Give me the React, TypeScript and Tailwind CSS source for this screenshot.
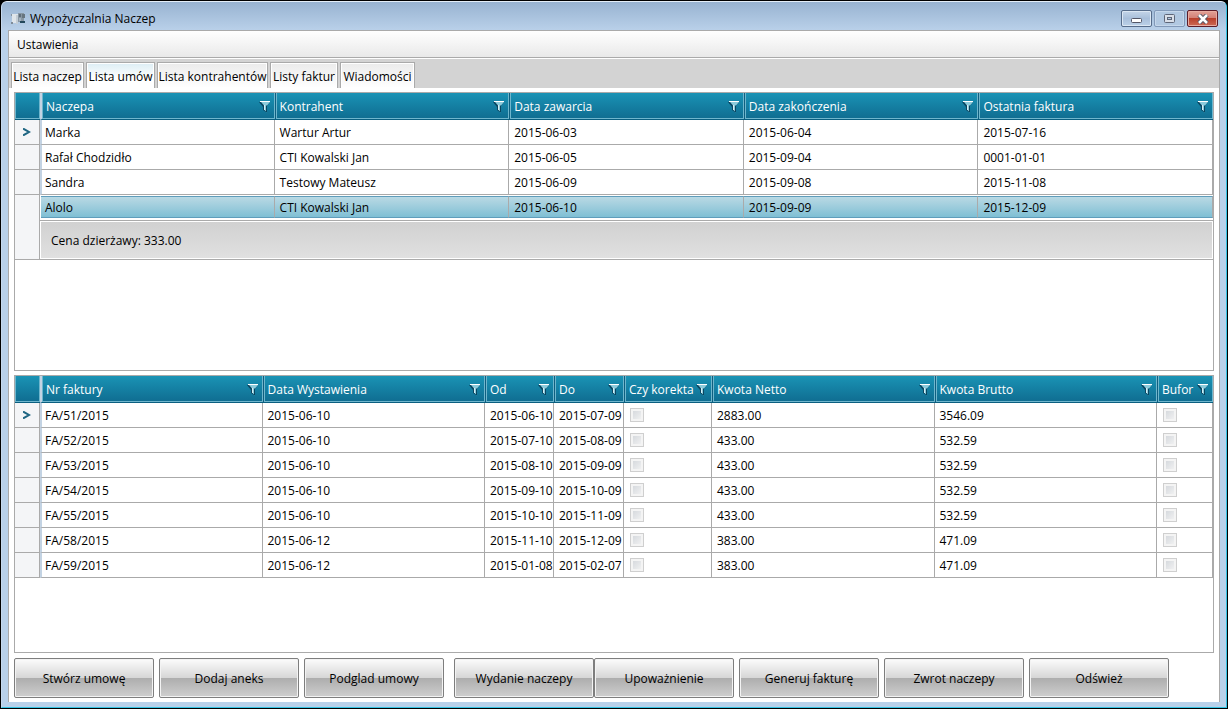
import type { ReactNode } from "react";

const tabs = [
  { name: "Lista naczep", width: "w-[73px]" },
  { name: "Lista umów", width: "w-[69px]" },
  { name: "Lista kontrahentów", width: "w-[111px]" },
  { name: "Listy faktur", width: "w-[68px]" },
  { name: "Wiadomości", width: "w-[75px]" },
];

const contracts = [
  ["Marka", "Wartur Artur", "2015-06-03", "2015-06-04", "2015-07-16"],
  ["Rafał Chodzidło", "CTI Kowalski Jan", "2015-06-05", "2015-09-04", "0001-01-01"],
  ["Sandra", "Testowy Mateusz", "2015-06-09", "2015-09-08", "2015-11-08"],
  ["Alolo", "CTI Kowalski Jan", "2015-06-10", "2015-09-09", "2015-12-09"],
];

const invoices = [
  ["FA/51/2015", "2015-06-10", "2015-06-10", "2015-07-09", "2883.00", "3546.09"],
  ["FA/52/2015", "2015-06-10", "2015-07-10", "2015-08-09", "433.00", "532.59"],
  ["FA/53/2015", "2015-06-10", "2015-08-10", "2015-09-09", "433.00", "532.59"],
  ["FA/54/2015", "2015-06-10", "2015-09-10", "2015-10-09", "433.00", "532.59"],
  ["FA/55/2015", "2015-06-10", "2015-10-10", "2015-11-09", "433.00", "532.59"],
  ["FA/58/2015", "2015-06-12", "2015-11-10", "2015-12-09", "383.00", "471.09"],
  ["FA/59/2015", "2015-06-12", "2015-01-08", "2015-02-07", "383.00", "471.09"],
];

const actions = [
  ["Stwórz umowę", "Dodaj aneks", "Podglad umowy"],
  ["Wydanie naczepy"],
  ["Upoważnienie", "Generuj fakturę", "Zwrot naczepy", "Odśwież"],
];

function AppIcon() {
  return (
    <svg width="16" height="16" viewBox="0 0 16 16" shapeRendering="crispEdges">
      <rect x="2" y="3" width="6" height="9" fill="#dfe5ea" />
      <rect x="1" y="3" width="1" height="2" fill="#8795a3" />
      <rect x="1" y="11" width="2" height="2" fill="#7f8c99" />
      <rect x="6" y="4" width="2" height="9" fill="#c3cdd6" />
      <rect x="8" y="2" width="6" height="9" fill="#8796a3" />
      <rect x="9" y="3" width="2" height="3" fill="#5f6e7b" />
      <rect x="12" y="3" width="3" height="4" fill="#67757f" />
      <rect x="9" y="7" width="2" height="3" fill="#a3b2bf" />
      <rect x="10" y="10" width="5" height="2" fill="#23485c" />
    </svg>
  );
}

function FilterIcon() {
  return (
    <svg width="12" height="12" viewBox="0 0 12 12" className="shrink-0">
      <path d="M0 1H11L7.500 5.500V11.500L4 9V6Z" fill="#0a4560" />
      <path d="M2 1H11L8 4.500V11.500L5.500 9V5Z" fill="#8ccbdc" />
      <path d="M7.500 4.500V11" stroke="#0a4560" />
      <path d="M1 .5H11" stroke="#fff" />
      <path d="M5.500 4V9" stroke="#d4edf4" />
    </svg>
  );
}

function Arrow() {
  return (
    <svg width="8" height="8" viewBox="0 0 8 8" className="ml-2">
      <path d="M0 .5L6 4L0 7.500" fill="none" stroke="#1f6683" strokeWidth="2" />
    </svg>
  );
}

function HeaderCell({ children, first }: { children: ReactNode; first?: boolean }) {
  return (
    <th
      className={
        first
          ? "h-[27px] border-b border-l-2 border-b-[#0a5f80] border-l-[#c3d3e3] p-0 text-left font-normal"
          : "h-[27px] border-b border-l border-b-[#0a5f80] border-l-[#0f5f80] p-0 text-left font-normal"
      }
    >
      <div className="flex h-[26px] items-center justify-between border border-t-0 border-[#6fb6cd] pt-[3px] pr-[3px] pl-[3px]">
        <span className="whitespace-nowrap">{children}</span>
        <FilterIcon />
      </div>
    </th>
  );
}

function HeaderRow({ columns }: { columns: string[] }) {
  return (
    <thead>
      <tr className="bg-linear-to-b from-[#1a93b5] to-[#0f6b8f] text-white">
        <td className="h-[27px] border-b border-b-[#0a5f80] p-0">
          <div className="h-[26px] border border-t-0 border-[#6fb6cd]"></div>
        </td>
        {columns.map((column, i) => (
          <HeaderCell key={column} first={i === 0}>
            {column}
          </HeaderCell>
        ))}
      </tr>
    </thead>
  );
}

function Indicator({ current, rowSpan }: { current?: boolean; rowSpan?: number }) {
  return (
    <td
      rowSpan={rowSpan}
      className="border-r border-b border-[#aaaaaa] bg-[#f4f5f7] p-0"
    >
      {current && <Arrow />}
    </td>
  );
}

function Cell({ children, first }: { children: ReactNode; first?: boolean }) {
  return (
    <td
      className={
        first
          ? "h-[25px] border-r border-b border-l-2 border-[#aaaaaa] border-l-[#c3d3e3] p-0 pt-[2px] pl-[3px] whitespace-nowrap"
          : "h-[25px] border-r border-b border-[#aaaaaa] p-0 pt-[2px] pl-[5px] whitespace-nowrap"
      }
    >
      {children}
    </td>
  );
}

function CheckCell({ label }: { label: string }) {
  return (
    <td className="h-[25px] border-r border-b border-[#aaaaaa] p-0 pl-[6px]">
      <input
        type="checkbox"
        disabled
        aria-label={label}
        className="block size-[14px] appearance-none border border-[#cfcfcf] bg-linear-to-br from-[#d0d4d9] to-[#f6f6f6] shadow-[inset_0_0_0_2px_#f4f4f4]"
      />
    </td>
  );
}

function ContractsTable() {
  return (
    <table className="w-full table-fixed border-separate border-spacing-0">
      <colgroup>
        <col className="w-[25px]" />
        <col span={5} />
      </colgroup>
      <HeaderRow
        columns={["Naczepa", "Kontrahent", "Data zawarcia", "Data zakończenia", "Ostatnia faktura"]}
      />
      <tbody>
        {contracts.slice(0, 3).map((row, i) => (
          <tr key={row[0]}>
            <Indicator current={i === 0} />
            {row.map((value, j) => (
              <Cell key={j} first={j === 0}>
                {value}
              </Cell>
            ))}
          </tr>
        ))}
        <tr>
          <Indicator rowSpan={2} />
          {contracts[3].map((value, j) => (
            <td
              key={j}
              className="h-[26px] border-b border-[#aaaaaa] p-0 pt-px pb-[2px] nth-2:pl-px"
            >
              <div className="flex h-[22px] items-center border-y border-r border-y-[#5f9dbb] border-r-[#aaaaaa] bg-linear-to-b from-[#b9d9e4] to-[#7fbfd4] pt-[2px]">
                <span className={j === 0 ? "pl-1" : "pl-[5px]"}>{value}</span>
              </div>
            </td>
          ))}
        </tr>
        <tr>
          <td colSpan={5} className="h-[39px] border-b border-[#aaaaaa] p-0">
            <div className="m-px flex h-[36px] items-center bg-linear-to-b from-[#d1d1d1] to-[#e0e0e0] pt-[2px] pl-[10px]">
              Cena dzierżawy: 333.00
            </div>
          </td>
        </tr>
      </tbody>
    </table>
  );
}

function InvoicesTable() {
  return (
    <table className="w-full table-fixed border-separate border-spacing-0">
      <colgroup>
        <col className="w-[25px]" />
        <col span={2} />
        <col className="w-[69px]" />
        <col className="w-[70px]" />
        <col className="w-[88px]" />
        <col span={2} />
        <col className="w-[56px]" />
      </colgroup>
      <HeaderRow
        columns={["Nr faktury", "Data Wystawienia", "Od", "Do", "Czy korekta", "Kwota Netto", "Kwota Brutto", "Bufor"]}
      />
      <tbody>
        {invoices.map(([number, issued, from, to, net, gross], i) => (
          <tr key={number}>
            <Indicator current={i === 0} />
            <Cell first>{number}</Cell>
            <Cell>{issued}</Cell>
            <Cell>{from}</Cell>
            <Cell>{to}</Cell>
            <CheckCell label={`Czy korekta ${number}`} />
            <Cell>{net}</Cell>
            <Cell>{gross}</Cell>
            <CheckCell label={`Bufor ${number}`} />
          </tr>
        ))}
      </tbody>
    </table>
  );
}

function ActionButton({ children }: { children: ReactNode }) {
  return (
    <button className="h-10 w-[140px] rounded-[2px] border border-[#7e7e7e] bg-[#f3f3f3] p-px">
      <span className="flex h-full items-center justify-center bg-[linear-gradient(#fafafa,#d6d6d6_50%,#adadad_50%,#cdcdcd)] pt-[2px]">
        {children}
      </span>
    </button>
  );
}

export default function App() {
  return (
    <div className="flex min-h-screen flex-col bg-black p-px font-['Open_Sans',sans-serif] text-[12px] leading-4 text-black">
      <div className="flex grow flex-col rounded-t-[6px] border border-t-[#e4eef8] border-r-[#35c4e4] border-b-[#35c4e4] border-l-[#c6d9ee] bg-[#b9d1ea] px-[6px] pb-[5px]">
        <header className="-mx-[6px] flex h-7 items-start justify-between rounded-t-[5px] bg-linear-to-b from-[#98b3d1] to-[#b9d0e9] pr-2 pl-2">
          <div className="flex items-center gap-1 pt-[9px]">
            <AppIcon />
            <h1>Wypożyczalnia Naczep</h1>
          </div>
          <div className="flex gap-[2px] pt-2">
            <button
              aria-label="Minimalizuj"
              className="flex h-[17px] w-[31px] items-center justify-center rounded-[2px] border border-[#566c8a] bg-linear-to-b from-[#c4d5e8] via-[#a8bfda] to-[#bcd1e8] pt-1 shadow-[inset_0_0_0_1px_#dbe7f3]"
            >
              <svg width="11" height="5" viewBox="0 0 11 5">
                <rect x=".5" y=".5" width="10" height="4" rx="1" fill="#fff" stroke="#535666" />
              </svg>
            </button>
            <button
              aria-label="Maksymalizuj"
              className="flex h-[17px] w-[31px] items-center justify-center rounded-[2px] border border-[#8299b8] bg-[#b1c8e1] shadow-[inset_0_0_0_1px_#c5d7eb]"
            >
              <svg width="11" height="9" viewBox="0 0 11 9">
                <rect x=".5" y=".5" width="10" height="8" rx="1" fill="#d9dfe8" stroke="#5e6678" />
                <rect x="3.5" y="3.5" width="4" height="2" fill="#b1c8e1" stroke="#5e6678" />
              </svg>
            </button>
            <button
              aria-label="Zamknij"
              className="flex h-[17px] w-[31px] items-center justify-center rounded-[2px] border border-[#5c1c28] bg-[linear-gradient(#e2a197,#d48277_45%,#b9402c_50%,#cc6a55)] shadow-[inset_0_0_0_1px_#e8aca1]"
            >
              <svg width="12" height="10" viewBox="0 0 12 10">
                <path d="M2 1L10 9M10 1L2 9" stroke="#535666" strokeWidth="4.5" />
                <path d="M2 1L10 9M10 1L2 9" stroke="#fff" strokeWidth="2.5" />
              </svg>
            </button>
          </div>
        </header>
        <main className="flex grow flex-col border border-b-0 border-[#aaaaaa] bg-white">
          <nav className="flex h-[27px] items-center border-b border-[#aaaaaa] bg-linear-to-b from-white to-[#e9e9e9] pt-[2px] pl-2">
            <button>Ustawienia</button>
          </nav>
          <div className="flex h-[30px] items-end gap-[2px] border-t border-white bg-[#d3d3d3] px-[2px]" role="tablist">
            {tabs.map((tab, i) => (
              <button
                key={tab.name}
                role="tab"
                aria-selected={i === 1}
                className={`${tab.width} flex h-[26px] justify-center border border-b-0 border-[#aaaaaa] pt-[6px] whitespace-nowrap shadow-[inset_0_0_0_1px_#fff] ${
                  i === 1
                    ? "bg-linear-to-b from-[#dcedf4] to-white to-60%"
                    : "bg-linear-to-b from-[#ebebeb] to-white"
                }`}
              >
                {tab.name}
              </button>
            ))}
          </div>
          <div className="flex grow flex-col px-[5px] pt-1 pb-[3px]">
            <section className="min-h-[279px] border border-[#aaaaaa]">
              <ContractsTable />
            </section>
            <section className="mt-1 grow border border-[#aaaaaa]">
              <InvoicesTable />
            </section>
            <footer className="mt-[5px] mb-px flex">
              {actions.map((group, i) => (
                <div key={i} className={i === 1 ? "ml-[10px] flex" : "flex gap-[5px]"}>
                  {group.map((name) => (
                    <ActionButton key={name}>{name}</ActionButton>
                  ))}
                </div>
              ))}
            </footer>
          </div>
        </main>
      </div>
    </div>
  );
}
